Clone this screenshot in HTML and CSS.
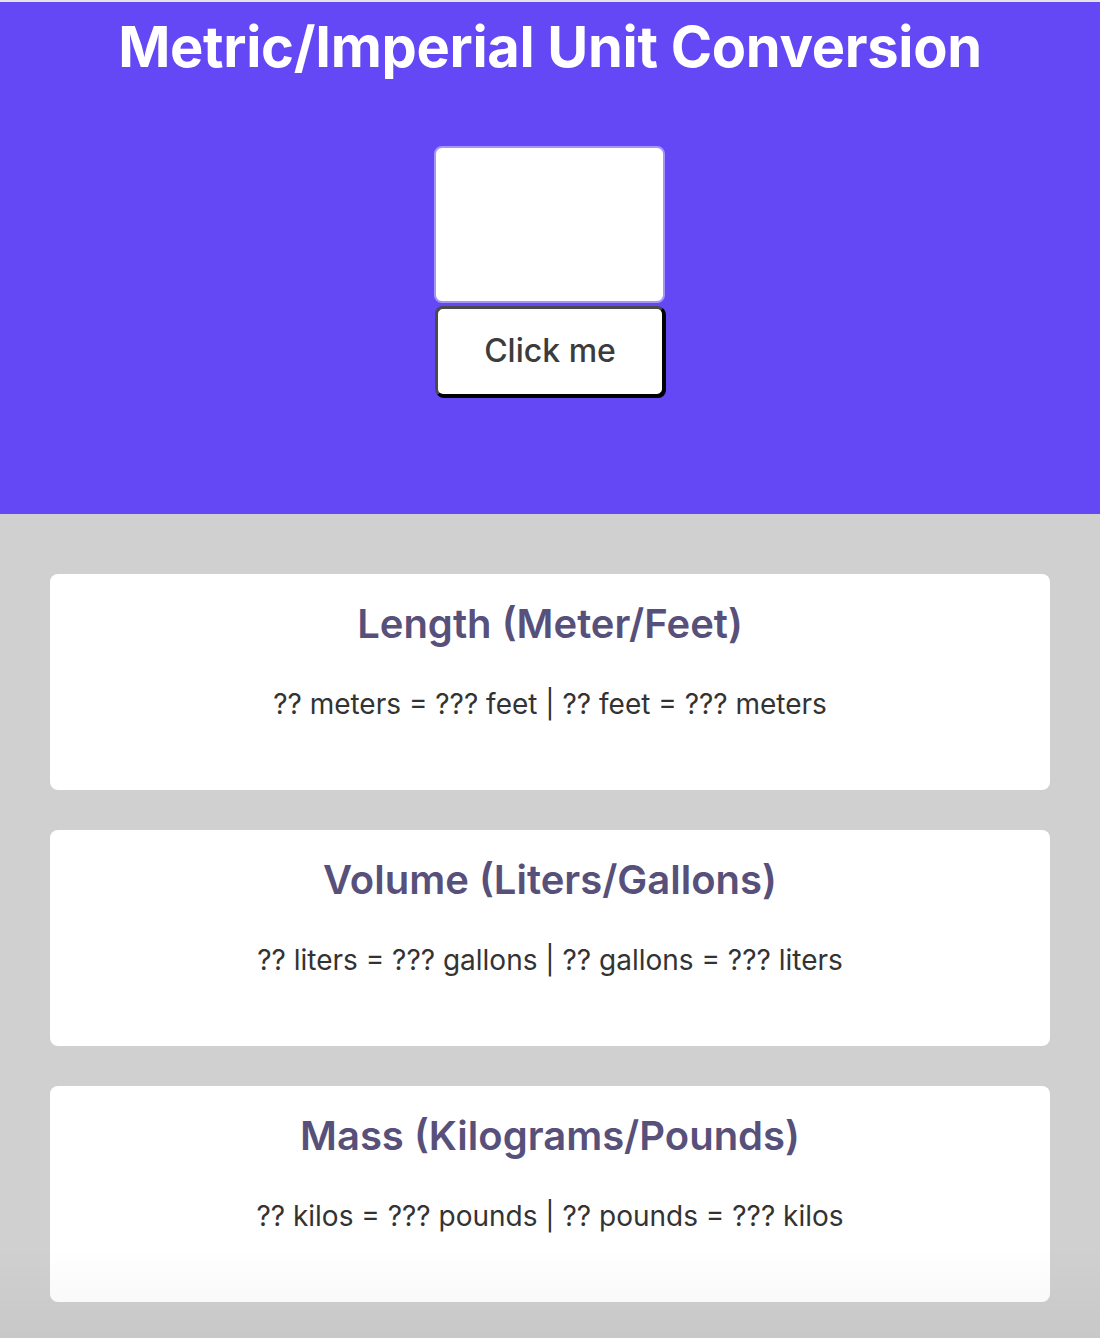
FILE: index.html
```html
<!DOCTYPE html>
<html lang="en">
<head>
<meta charset="utf-8">
<title>Metric/Imperial Unit Conversion</title>
<link rel="stylesheet" href="styles.css">
</head>
<body>
<div class="page">
  <header class="hero">
    <h1 class="title">Metric/Imperial Unit Conversion</h1>
    <div class="controls">
      <input class="amount" type="text" aria-label="Value">
      <button class="convert" type="button">Click me</button>
    </div>
  </header>
  <main class="results">
    <section class="card">
      <h2 class="card-title">Length (Meter/Feet)</h2>
      <p class="card-text">?? meters = ??? feet | ?? feet = ??? meters</p>
    </section>
    <section class="card">
      <h2 class="card-title">Volume (Liters/Gallons)</h2>
      <p class="card-text">?? liters = ??? gallons | ?? gallons = ??? liters</p>
    </section>
    <section class="card">
      <h2 class="card-title">Mass (Kilograms/Pounds)</h2>
      <p class="card-text">?? kilos = ??? pounds | ?? pounds = ??? kilos</p>
    </section>
  </main>
  <div class="shade"></div>
</div>
</body>
</html>
```

FILE: styles.css
```css
* { box-sizing: border-box; }

html, body {
  margin: 0;
  padding: 0;
  background: #ffffff;
}

body {
  font-family: Inter, "Noto Sans", sans-serif;
}

.page {
  position: relative;
  width: 1100px;
  border-top: 2px solid #e4e4e4;
  background: #d0d0d0;
  min-height: 1336px;
  overflow: hidden;
}

.hero {
  background: #6447f5;
  height: 512px;
  padding-top: 11px;
  display: flex;
  flex-direction: column;
  align-items: center;
}

.title {
  margin: 0;
  color: #ffffff;
  font-size: 56px;
  font-weight: 700;
  line-height: 69px;
  letter-spacing: -0.3px;
}

.controls {
  margin-top: 64px;
  display: flex;
  flex-direction: column;
  align-items: center;
  gap: 3px;
}

.amount {
  width: 231px;
  height: 157px;
  margin-left: -1px;
  background: #ffffff;
  border: 2px solid #a597fa;
  border-radius: 8px;
  outline: none;
  font: inherit;
}

.convert {
  width: 230px;
  height: 91px;
  background: #ffffff;
  border: 3px solid #4a4a4a;
  border-right-color: #000000;
  border-bottom-color: #000000;
  border-radius: 8px;
  box-shadow: 1px 1px 0 #000000;
  color: #3c3c3c;
  font-family: Inter, "Noto Sans", sans-serif;
  font-size: 32px;
  font-weight: 500;
  padding: 0 0 2px;
}

.results {
  padding: 60px 50px 36px;
  display: flex;
  flex-direction: column;
  gap: 40px;
}

.card {
  background: #ffffff;
  border-radius: 8px;
  height: 216px;
  padding-top: 20px;
  text-align: center;
}

.card-title {
  margin: 0;
  color: #57507a;
  font-size: 40px;
  font-weight: 600;
  line-height: 60px;
}

.card-text {
  margin: 30px 0 0;
  color: #333333;
  font-size: 28px;
  font-weight: 400;
  line-height: 40px;
}

.shade {
  position: absolute;
  left: 0;
  right: 0;
  bottom: 0;
  height: 90px;
  background: linear-gradient(to bottom, rgba(0, 0, 0, 0), rgba(0, 0, 0, 0.04));
  pointer-events: none;
}
```
